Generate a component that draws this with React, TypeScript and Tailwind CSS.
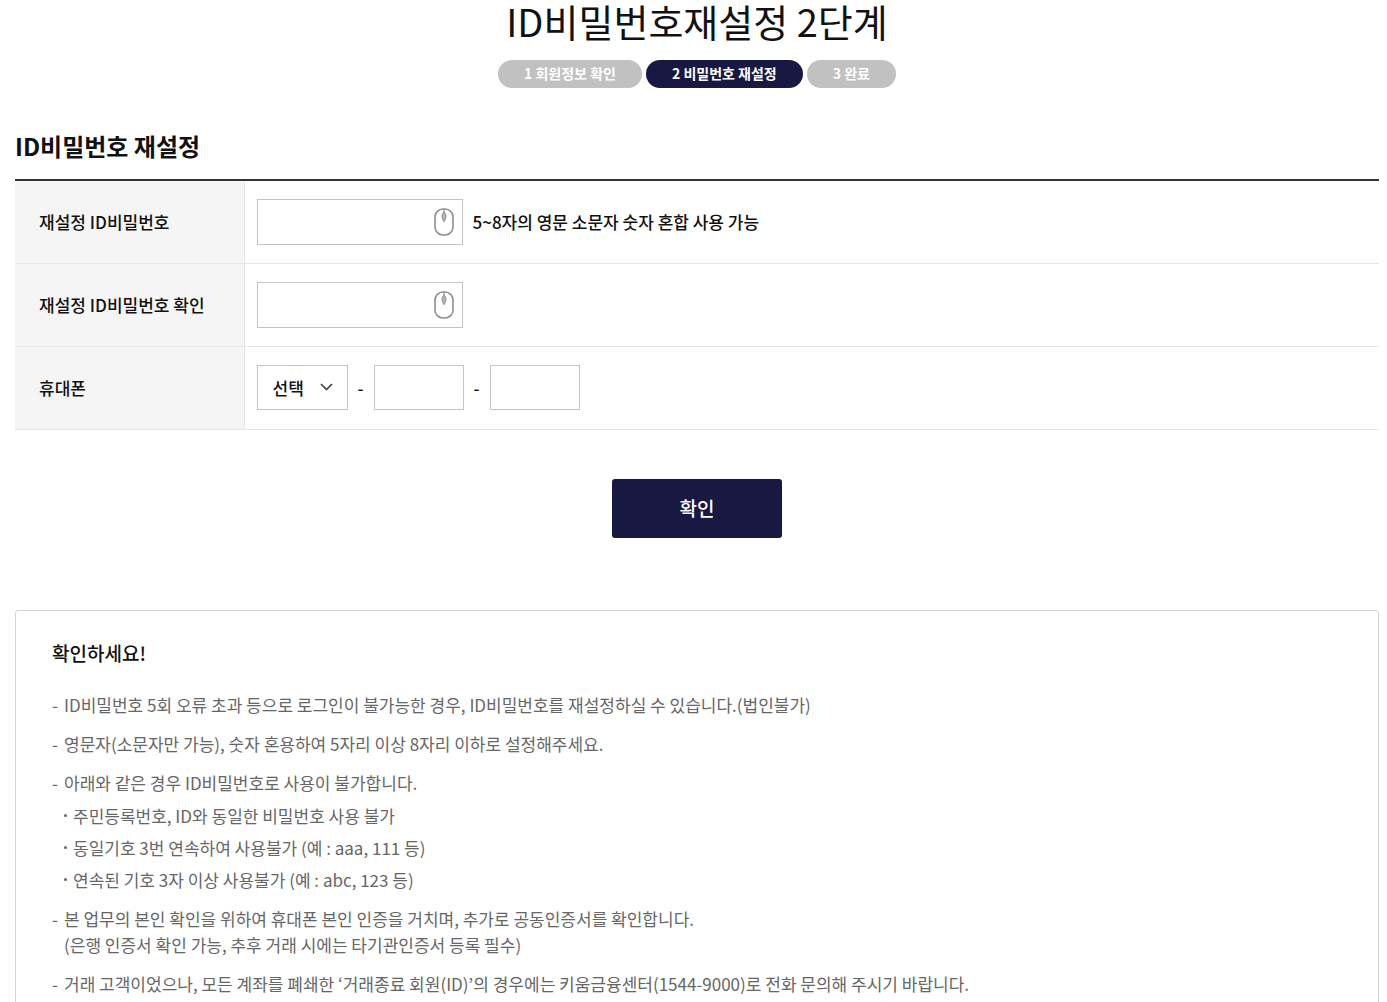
import { useState } from "react";
import type { ReactNode } from "react";

const STEPS = ["1 회원정보 확인", "2 비밀번호 재설정", "3 완료"];
const CURRENT_STEP = 1;

const PHONE_PREFIXES = ["010", "011", "016", "017", "018", "019"];

type Notice = {
  text: string;
  extra?: string;
  items?: string[];
};

const NOTICES: Notice[] = [
  {
    text: "ID비밀번호 5회 오류 초과 등으로 로그인이 불가능한 경우, ID비밀번호를 재설정하실 수 있습니다.(법인불가)",
  },
  { text: "영문자(소문자만 가능), 숫자 혼용하여 5자리 이상 8자리 이하로 설정해주세요." },
  {
    text: "아래와 같은 경우 ID비밀번호로 사용이 불가합니다.",
    items: [
      "주민등록번호, ID와 동일한 비밀번호 사용 불가",
      "동일기호 3번 연속하여 사용불가 (예 : aaa, 111 등)",
      "연속된 기호 3자 이상 사용불가 (예 : abc, 123 등)",
    ],
  },
  {
    text: "본 업무의 본인 확인을 위하여 휴대폰 본인 인증을 거치며, 추가로 공동인증서를 확인합니다.",
    extra: "(은행 인증서 확인 가능, 추후 거래 시에는 타기관인증서 등록 필수)",
  },
  {
    text: "거래 고객이었으나, 모든 계좌를 폐쇄한 ‘거래종료 회원(ID)’의 경우에는 키움금융센터(1544-9000)로 전화 문의해 주시기 바랍니다.",
  },
];

function stepClass(active: boolean) {
  return `h-7 rounded-full px-[26px] text-sm leading-[26px] font-bold text-white ${
    active ? "bg-[#181843]" : "bg-[#c1c1c1]"
  }`;
}

function MouseIcon() {
  return (
    <svg width="20" height="28" viewBox="0 0 20 28" fill="none" aria-hidden="true">
      <rect x="1" y="1" width="18" height="26" rx="8" stroke="#8f8f8f" strokeWidth="1.6" />
      <path d="M10 1v4" stroke="#8f8f8f" strokeWidth="1.2" />
      <path
        d="M10 3.5c1.4 1.8 2.2 3.2 2.2 4.9s-.9 3.2-2.2 5.6c-1.3-2.4-2.2-3.9-2.2-5.6s.8-3.1 2.2-4.9z"
        fill="#a3a3a3"
        stroke="#8f8f8f"
        strokeWidth=".6"
      />
      <path d="M10 6.5v4" stroke="#d2d2d2" strokeWidth="1" />
    </svg>
  );
}

function PasswordField({ id }: { id: string }) {
  const [value, setValue] = useState("");

  return (
    <div className="relative">
      <input
        id={id}
        type="password"
        maxLength={8}
        value={value}
        onChange={(e) => setValue(e.target.value)}
        className="block h-[46px] w-[206px] border border-[#c4c4c4] bg-white pr-10 pl-3"
      />
      <button type="button" aria-label="마우스 입력기" className="absolute top-[9px] right-[9px]">
        <MouseIcon />
      </button>
    </div>
  );
}

function FormRow({ label, htmlFor, children }: { label: string; htmlFor: string; children: ReactNode }) {
  return (
    <tr className="h-[83px] border-b border-[#e5e5e5]">
      <th scope="row" className="w-[229px] border-r border-[#e5e5e5] bg-[#f5f5f5] pl-6 text-left font-medium">
        <label htmlFor={htmlFor}>{label}</label>
      </th>
      <td className="pl-3">
        <div className="flex items-center gap-[10px]">{children}</div>
      </td>
    </tr>
  );
}

export default function App() {
  const [prefix, setPrefix] = useState("");

  return (
    <main className="bg-white pr-2 pb-10 pl-[15px] font-['Noto_Sans_CJK_KR','Noto_Sans_CJK_SC',sans-serif] text-[17px] leading-[26px] text-[#111]">
      <h1 className="text-center text-[38px] leading-[42px]">ID비밀번호재설정 2단계</h1>

      <ol className="mt-[18px] flex justify-center gap-1">
        {STEPS.map((step, i) => (
          <li key={step} aria-current={i === CURRENT_STEP ? "step" : undefined} className={stepClass(i === CURRENT_STEP)}>
            {step}
          </li>
        ))}
      </ol>

      <form onSubmit={(e) => e.preventDefault()}>
        <h2 className="mt-10 text-2xl leading-9 font-bold">ID비밀번호 재설정</h2>

        <table className="mt-[15px] w-full border-collapse border-t-2 border-[#333]">
          <tbody>
            <FormRow label="재설정 ID비밀번호" htmlFor="new-password">
              <PasswordField id="new-password" />
              <span className="font-medium">5~8자의 영문 소문자 숫자 혼합 사용 가능</span>
            </FormRow>
            <FormRow label="재설정 ID비밀번호 확인" htmlFor="confirm-password">
              <PasswordField id="confirm-password" />
            </FormRow>
            <FormRow label="휴대폰" htmlFor="phone-prefix">
              <div className="relative">
                <select
                  id="phone-prefix"
                  value={prefix}
                  onChange={(e) => setPrefix(e.target.value)}
                  className="block h-[45px] w-[91px] appearance-none border border-[#c4c4c4] bg-white pl-[15px] font-medium"
                >
                  <option value="">선택</option>
                  {PHONE_PREFIXES.map((p) => (
                    <option key={p} value={p}>
                      {p}
                    </option>
                  ))}
                </select>
                <svg
                  className="pointer-events-none absolute top-[18px] right-[15px]"
                  width="13"
                  height="8"
                  viewBox="0 0 13 8"
                  fill="none"
                  aria-hidden="true"
                >
                  <path d="M1 1l5.5 5.5L12 1" stroke="#444" strokeWidth="1.7" />
                </svg>
              </div>
              <span className="font-medium">-</span>
              <input aria-label="휴대폰 가운데 번호" maxLength={4} className="h-[45px] w-[90px] border border-[#c4c4c4] px-3" />
              <span className="font-medium">-</span>
              <input aria-label="휴대폰 끝 번호" maxLength={4} className="h-[45px] w-[90px] border border-[#c4c4c4] px-3" />
            </FormRow>
          </tbody>
        </table>

        <div className="mt-[49px] flex justify-center">
          <button type="submit" className="h-[59px] w-[170px] rounded-[3px] bg-[#181843] text-[19px] font-medium text-white">
            확인
          </button>
        </div>
      </form>

      <section className="mt-[72px] rounded-[3px] border border-[#d4d4d4] px-9 py-[29px]">
        <h3 className="text-[19px] font-medium">확인하세요!</h3>
        <ul className="mt-[26px] space-y-[13px] text-[#666]">
          {NOTICES.map((notice) => (
            <li key={notice.text} className="flex">
              <span className="w-3 shrink-0">-</span>
              <div>
                <p>{notice.text}</p>
                {notice.extra && <p>{notice.extra}</p>}
                {notice.items && (
                  <ul className="mt-[7px] space-y-[6px]">
                    {notice.items.map((item) => (
                      <li key={item} className="flex items-center gap-[6px]">
                        <span className="size-[3px] shrink-0 rounded-full bg-[#666]" />
                        {item}
                      </li>
                    ))}
                  </ul>
                )}
              </div>
            </li>
          ))}
        </ul>
      </section>
    </main>
  );
}
